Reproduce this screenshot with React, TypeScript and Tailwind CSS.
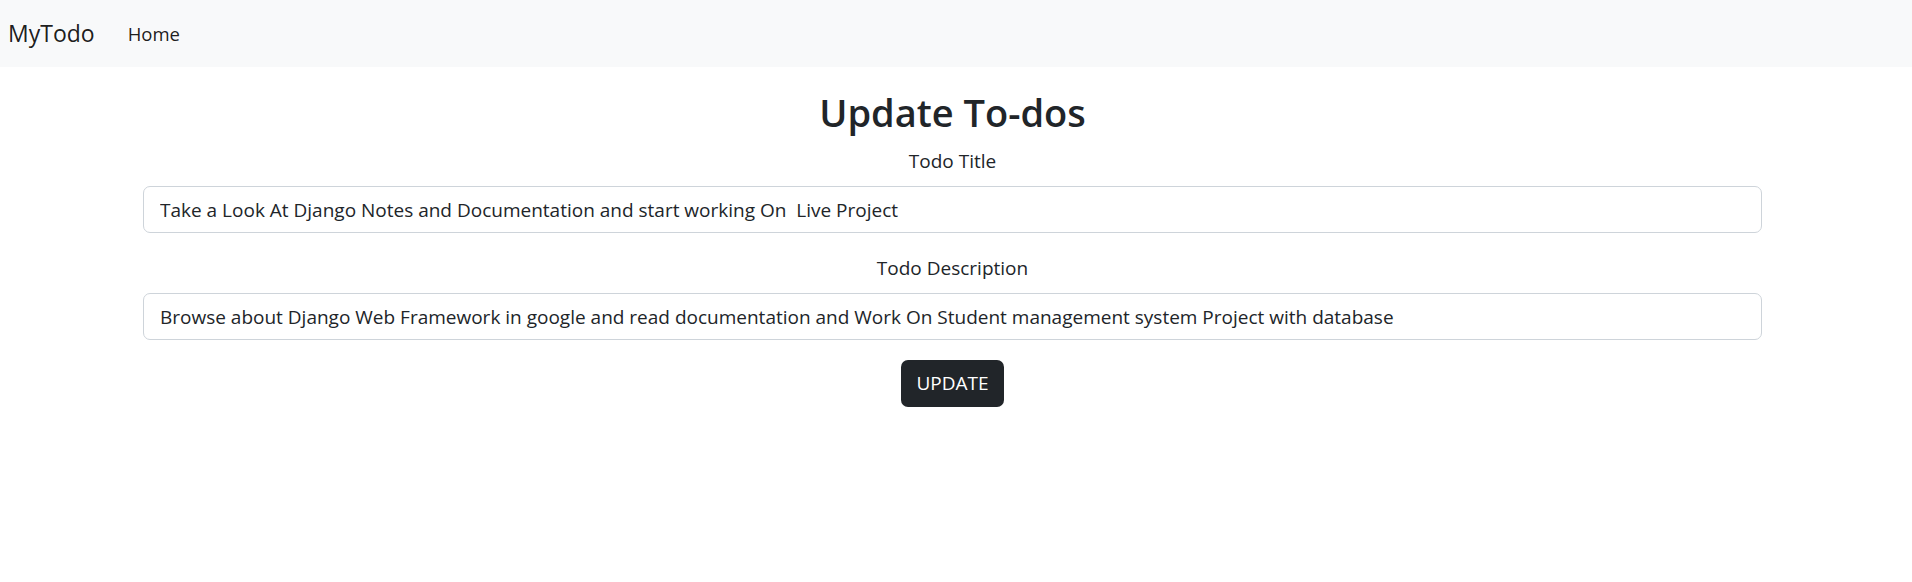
const App = () => {
  return (
    <div className="min-h-[582px] bg-white font-['Open_Sans',sans-serif] text-[#212529]">
      <nav className="flex h-[67px] items-center bg-[#f8f9fa] pl-[8px]">
        <a className="text-[23px] text-black/90">MyTodo</a>
        <a className="ml-[33px] text-[18.5px] text-black/90">Home</a>
      </nav>

      <div className="pl-[143px] pr-[150px] pt-[21px] text-center">
        <h2 className="mb-[10px] text-[38px] leading-[48px] font-semibold">
          Update To-dos
        </h2>

        <form className="flex flex-col items-center">
          <label className="mb-[10px] text-[19px] leading-[30px]">
            Todo Title
          </label>
          <input
            type="text"
            defaultValue="Take a Look At Django Notes and Documentation and start working On  Live Project"
            className="mb-[20px] h-[47px] w-full rounded-[7px] border border-[#ced4da] px-[16px] text-[19px] text-[#212529] outline-none"
          />

          <label className="mb-[10px] text-[19px] leading-[30px]">
            Todo Description
          </label>
          <input
            type="text"
            defaultValue="Browse about Django Web Framework in google and read documentation and Work On Student management system Project with database"
            className="mb-[20px] h-[47px] w-full rounded-[7px] border border-[#ced4da] px-[16px] text-[19px] text-[#212529] outline-none"
          />

          <button
            type="button"
            className="h-[47px] rounded-[7px] bg-[#212529] px-[15px] text-[19px] text-white"
          >
            UPDATE
          </button>
        </form>
      </div>
    </div>
  );
};

export default App;
